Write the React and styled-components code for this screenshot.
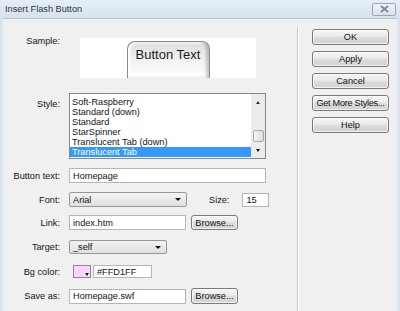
import React from "react";
import styled, { createGlobalStyle } from "styled-components";

const GlobalStyle = createGlobalStyle`
  html, body {
    margin: 0;
    padding: 0;
    background: #f0f0f0;
  }
  body {
    font-family: "Liberation Sans", Arial, sans-serif;
    font-size: 9.2px;
    color: #141414;
  }
`;

const styles = [
  "Soft-Raspberry",
  "Standard (down)",
  "Standard",
  "StarSpinner",
  "Translucent Tab (down)",
  "Translucent Tab",
];

const Window = styled.div`
  width: 400px;
  height: 311px;
  display: flex;
  flex-direction: column;
  background: #dae5f1;
  overflow: hidden;
`;

const TitleBar = styled.div`
  height: 18px;
  flex: none;
  display: flex;
  align-items: center;
  justify-content: space-between;
  padding: 0 4px 0 5px;
  background: linear-gradient(#e6eef7, #d6e2ef);
  color: #2a3542;
`;

const CloseButton = styled.div`
  width: 22px;
  height: 11px;
  border: 1px solid #9aa6b3;
  border-radius: 2px;
  background: linear-gradient(#eef3f8, #d9e2ec);
  display: flex;
  align-items: center;
  justify-content: center;
`;

const Body = styled.div`
  flex: 1;
  display: flex;
  margin: 0 3px;
  background: #f0f0f0;
  border-top: 1px solid #b9c3ce;
`;

const LeftPanel = styled.div`
  width: 294px;
  flex: none;
  display: flex;
  flex-direction: column;
`;

const Separator = styled.div`
  width: 1px;
  margin-top: 8px;
  background: #c9c9c9;
  border-right: 1px solid #ffffff;
`;

const RightPanel = styled.div`
  display: flex;
  flex-direction: column;
  gap: 6px;
  padding: 10px 0 0 13px;
`;

const Row = styled.div`
  display: flex;
  align-items: ${(p) => (p.$top ? "flex-start" : "center")};
  margin-top: ${(p) => p.$mt}px;
`;

const Label = styled.div`
  width: 57px;
  flex: none;
  margin-right: 9px;
  text-align: right;
  line-height: 10px;
  margin-top: ${(p) => p.$offset || 0}px;
`;

const SideLabel = styled.div`
  line-height: 10px;
  margin-left: ${(p) => p.$ml}px;
`;

const SampleBox = styled.div`
  margin-left: 11px;
  width: 176px;
  height: 40px;
  background: #ffffff;
  display: flex;
  justify-content: center;
  align-items: flex-end;
`;

const SampleTab = styled.div`
  width: 83px;
  height: 37px;
  box-sizing: border-box;
  border: 1px solid #8a8a8a;
  border-bottom: none;
  border-radius: 8px 8px 0 0;
  background: linear-gradient(#dcdcdc, #f2f2f2 50%, #ffffff);
  box-shadow: inset -3px 0 3px rgba(0, 0, 0, 0.2), inset 2px 2px 2px #ffffff;
  text-align: center;
  padding-top: 6px;
  font-size: 13px;
  line-height: 13px;
  color: #1a1a1a;
`;

const ListBox = styled.div`
  width: 197px;
  height: 66px;
  box-sizing: border-box;
  border: 1px solid #848991;
  background: #ffffff;
  display: flex;
`;

const ListItems = styled.div`
  flex: 1;
  padding-top: 3px;
`;

const ListItem = styled.div`
  line-height: 10px;
  padding-left: 2px;
  background: ${(p) => (p.$selected ? "#3399ff" : "transparent")};
  color: ${(p) => (p.$selected ? "#ffffff" : "#141414")};
`;

const ScrollBar = styled.div`
  width: 14px;
  display: flex;
  flex-direction: column;
  background: #ececec;
`;

const ScrollArrow = styled.div`
  height: 16px;
  flex: none;
  display: flex;
  align-items: center;
  justify-content: center;
`;

const ScrollTrack = styled.div`
  flex: 1;
  display: flex;
  align-items: flex-end;
  justify-content: center;
`;

const ScrollThumb = styled.div`
  width: 11px;
  height: 12px;
  box-sizing: border-box;
  border: 1px solid #a5a5a5;
  border-radius: 2px;
  background: linear-gradient(90deg, #f4f4f4, #dcdcdc);
`;

const TextField = styled.div`
  width: ${(p) => p.$w}px;
  height: ${(p) => p.$h || 15}px;
  margin-left: ${(p) => p.$ml || 0}px;
  box-sizing: border-box;
  border: 1px solid #b3b6bb;
  background: #ffffff;
  padding: 0 3px;
  display: flex;
  align-items: center;
  white-space: nowrap;
`;

const Select = styled.div`
  width: ${(p) => p.$w}px;
  height: ${(p) => p.$h || 15}px;
  box-sizing: border-box;
  border: 1px solid #979797;
  border-radius: 2px;
  background: linear-gradient(#f3f3f3, #eaeaea 50%, #e0e0e0);
  padding: 0 5px 0 3px;
  display: flex;
  align-items: center;
  justify-content: space-between;
`;

const Caret = styled.span`
  width: 0;
  height: 0;
  border-left: 3px solid transparent;
  border-right: 3px solid transparent;
  border-top: 3px solid #111;
  ${(p) => p.$up && "border-top: none; border-bottom: 3px solid #333;"}
  ${(p) => p.$small && "border-left-width: 2px; border-right-width: 2px;"}
`;

const Button = styled.div`
  width: ${(p) => p.$w || 77}px;
  height: ${(p) => p.$h || 16}px;
  margin-left: ${(p) => p.$ml || 0}px;
  box-sizing: border-box;
  border: 1px solid #7a7a7a;
  border-radius: 3px;
  background: linear-gradient(#f4f4f4, #ebebeb 45%, #dddddd 50%, #d2d2d2);
  box-shadow: inset 0 0 0 1px rgba(255, 255, 255, 0.7);
  display: flex;
  align-items: center;
  justify-content: center;
  white-space: nowrap;
  letter-spacing: ${(p) => (p.$tight ? "-0.3px" : "0")};
`;

const Swatch = styled.div`
  width: 18px;
  height: 13px;
  margin-left: 4px;
  box-sizing: border-box;
  border: 1px solid #8a8a8a;
  background: #ffd1ff;
  display: flex;
  align-items: flex-end;
  justify-content: flex-end;
  padding: 0 1px 1px 0;
`;

const SwatchArrow = styled.div`
  width: 5px;
  height: 4px;
  background: #f0f0f0;
  display: flex;
  align-items: center;
  justify-content: center;
`;

export default function App() {
  return (
    <>
      <GlobalStyle />
      <Window>
        <TitleBar>
          <span>Insert Flash Button</span>
          <CloseButton>
            <svg width="9" height="8" viewBox="0 0 9 8">
              <path d="M1 1 L8 7 M8 1 L1 7" stroke="#7b8795" strokeWidth="1.8" />
            </svg>
          </CloseButton>
        </TitleBar>
        <Body>
          <LeftPanel>
            <Row $mt={19} $top>
              <Label $offset={-2}>Sample:</Label>
              <SampleBox>
                <SampleTab>Button Text</SampleTab>
              </SampleBox>
            </Row>

            <Row $mt={15} $top>
              <Label $offset={6}>Style:</Label>
              <ListBox>
                <ListItems>
                  {styles.map((s) => (
                    <ListItem key={s} $selected={s === "Translucent Tab"}>
                      {s}
                    </ListItem>
                  ))}
                </ListItems>
                <ScrollBar>
                  <ScrollArrow>
                    <Caret $up $small />
                  </ScrollArrow>
                  <ScrollTrack>
                    <ScrollThumb />
                  </ScrollTrack>
                  <ScrollArrow>
                    <Caret $small />
                  </ScrollArrow>
                </ScrollBar>
              </ListBox>
            </Row>

            <Row $mt={9}>
              <Label>Button text:</Label>
              <TextField $w={197}>Homepage</TextField>
            </Row>

            <Row $mt={9}>
              <Label>Font:</Label>
              <Select $w={118}>
                Arial
                <Caret />
              </Select>
              <SideLabel $ml={22}>Size:</SideLabel>
              <TextField $w={27} $h={14} $ml={13}>
                15
              </TextField>
            </Row>

            <Row $mt={8}>
              <Label>Link:</Label>
              <TextField $w={117}>index.htm</TextField>
              <Button $w={47} $h={15} $ml={5}>
                Browse...
              </Button>
            </Row>

            <Row $mt={10}>
              <Label>Target:</Label>
              <Select $w={98} $h={14}>
                _self
                <Caret />
              </Select>
            </Row>

            <Row $mt={11}>
              <Label>Bg color:</Label>
              <Swatch>
                <SwatchArrow>
                  <Caret $small />
                </SwatchArrow>
              </Swatch>
              <TextField $w={59} $h={13} $ml={2}>
                #FFD1FF
              </TextField>
            </Row>

            <Row $mt={10}>
              <Label>Save as:</Label>
              <TextField $w={117}>Homepage.swf</TextField>
              <Button $w={47} $ml={5}>
                Browse...
              </Button>
            </Row>
          </LeftPanel>
          <Separator />
          <RightPanel>
            <Button>OK</Button>
            <Button>Apply</Button>
            <Button>Cancel</Button>
            <Button $tight>Get More Styles...</Button>
            <Button>Help</Button>
          </RightPanel>
        </Body>
      </Window>
    </>
  );
}
